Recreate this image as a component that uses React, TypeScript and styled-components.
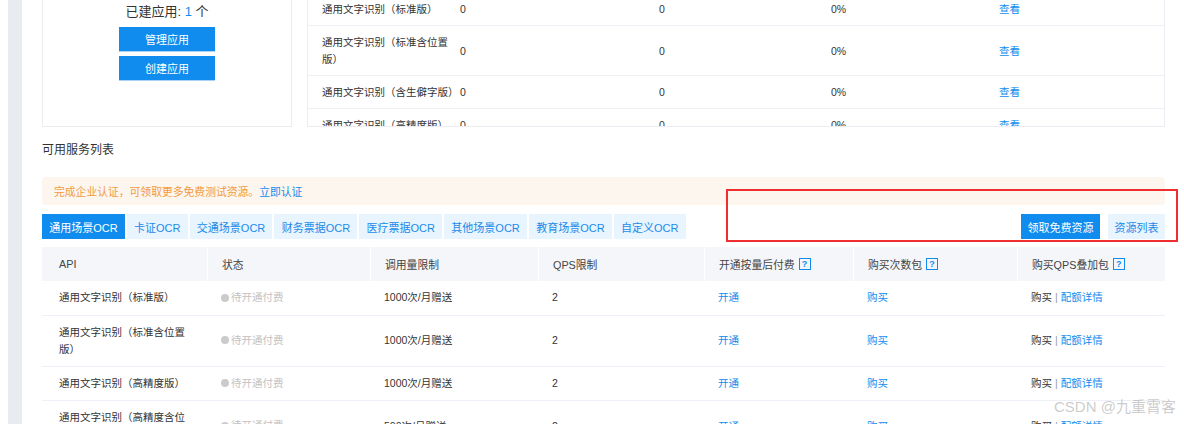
import React from "react";
import styled, { createGlobalStyle } from "styled-components";

const Global = createGlobalStyle`
  html, body {
    margin: 0;
    padding: 0;
    height: 424px;
    overflow: hidden;
    background: #fff;
  }
  body {
    font-family: "Liberation Sans", "Noto Sans CJK SC", sans-serif;
    color: #333;
  }
  * { box-sizing: border-box; }
`;

const BLUE = "#108cee";

const Page = styled.div`
  position: relative;
  display: flex;
  width: 1184px;
  height: 424px;
  overflow: hidden;
`;

const Gutter = styled.div`
  width: 8px;
  flex: none;
`;

const SideStrip = styled.div`
  width: 14px;
  flex: none;
  background: #e8ebf0;
`;

const Main = styled.main`
  position: relative;
  flex: 1;
  padding: 0 19px 0 20px;
`;

const TopSection = styled.section`
  margin-top: -8px;
  height: 135px;
  display: flex;
  gap: 15px;
`;

const AppCard = styled.div`
  width: 250px;
  flex: none;
  border: 1px solid #ececec;
  display: flex;
  flex-direction: column;
  align-items: center;
  padding-top: 10px;
`;

const AppCount = styled.div`
  font-size: 13px;
  line-height: 18px;
  color: #333;
  b {
    font-weight: normal;
    color: ${BLUE};
  }
`;

const AppButton = styled.button<{ $top: number }>`
  width: 96px;
  height: 24px;
  flex: none;
  margin-top: ${(p) => p.$top}px;
  border: none;
  background: ${BLUE};
  color: #fff;
  font-family: inherit;
  font-size: 11px;
  padding: 0;
  box-shadow: 0 1px 0 #a9d3f6;
`;

const UsageTable = styled.div`
  position: relative;
  flex: 1;
  border: 1px solid #ececf2;
  overflow: hidden;
`;

const ScrollThumb = styled.div`
  position: absolute;
  right: 3px;
  top: 0;
  width: 3px;
  height: 6px;
  background: #bdbdbd;
  border-radius: 1px;
`;

const UsageRow = styled.div`
  display: grid;
  grid-template-columns: 152px 199px 172px 168px 1fr;
  align-items: center;
  border-bottom: 1px solid #eef0f6;
  font-size: 10.5px;
  line-height: 17px;
  padding: 8px 0 7px;
`;

const UsageName = styled.div`
  padding-left: 14px;
  color: #333;
`;

const Plain = styled.div`
  color: #333;
`;

const Link = styled.span`
  color: ${BLUE};
  cursor: pointer;
`;

const SectionTitle = styled.h3`
  margin: 16px 0 0;
  font-size: 12px;
  line-height: 14px;
  font-weight: normal;
  color: #333;
`;

const Notice = styled.div`
  margin-top: 20px;
  height: 28px;
  background: #fcf6ef;
  border-radius: 4px;
  padding-left: 12px;
  display: flex;
  align-items: center;
  font-size: 10.8px;
  color: #f39a3f;
`;

const Toolbar = styled.div`
  margin-top: 9px;
  display: flex;
  justify-content: space-between;
  align-items: center;
`;

const Tabs = styled.div`
  display: flex;
  gap: 2px;
`;

const Tab = styled.div<{ $active?: boolean }>`
  height: 25px;
  padding: 0 7.2px;
  display: flex;
  align-items: center;
  font-size: 11px;
  background: ${(p) => (p.$active ? BLUE : "#e8f4fe")};
  color: ${(p) => (p.$active ? "#fff" : "#1a8bea")};
`;

const Actions = styled.div`
  display: flex;
  gap: 8px;
`;

const ActionButton = styled.div<{ $primary?: boolean }>`
  height: 25px;
  padding: 0 6.5px;
  display: flex;
  align-items: center;
  font-size: 11px;
  background: ${(p) => (p.$primary ? BLUE : "#e8f4fe")};
  color: ${(p) => (p.$primary ? "#fff" : "#1a8bea")};
`;

const Annotation = styled.div`
  position: absolute;
  left: 704px;
  top: 189px;
  width: 452px;
  height: 53px;
  border: 2px solid #ef2f2f;
  pointer-events: none;
`;

const COLS = "165px 163px 168px 166px 149px 164px 148px";

const ServiceTable = styled.div`
  margin-top: 8px;
`;

const HeadRow = styled.div`
  display: grid;
  grid-template-columns: ${COLS};
  height: 34px;
  background: #f5f6fa;
  font-size: 10.8px;
  color: #444;
`;

const HeadCell = styled.div<{ $first?: boolean }>`
  display: flex;
  align-items: center;
  padding-left: ${(p) => (p.$first ? 17 : 14)}px;
  border-left: ${(p) => (p.$first ? "none" : "1.5px solid #fff")};
`;

const Help = styled.span`
  margin-left: 4px;
  width: 12px;
  height: 12px;
  border: 1px solid ${BLUE};
  color: ${BLUE};
  font-size: 9px;
  font-weight: bold;
  display: inline-flex;
  align-items: center;
  justify-content: center;
  line-height: 1;
`;

const BodyRow = styled.div`
  display: grid;
  grid-template-columns: ${COLS};
  align-items: center;
  border-bottom: 1px solid #edf0f7;
  font-size: 10.5px;
  line-height: 17px;
  padding: 8px 0;
`;

const BodyCell = styled.div<{ $first?: boolean }>`
  padding-left: ${(p) => (p.$first ? 17 : 14)}px;
  padding-right: ${(p) => (p.$first ? 14 : 0)}px;
  color: #333;
`;

const Status = styled.span`
  display: inline-flex;
  align-items: center;
  gap: 2px;
  color: #c2c2c2;
  &::before {
    content: "";
    width: 8px;
    height: 8px;
    border-radius: 50%;
    background: #cbcbcb;
  }
`;

const Sep = styled.span`
  color: #999;
  margin: 0 3px;
`;

const Watermark = styled.div`
  position: absolute;
  left: 1054px;
  top: 398px;
  font-size: 15px;
  line-height: 18px;
  color: rgba(140, 140, 140, 0.45);
  white-space: nowrap;
  pointer-events: none;
`;

const usage = [
  "通用文字识别（标准版）",
  "通用文字识别（标准含位置版）",
  "通用文字识别（含生僻字版）",
  "通用文字识别（高精度版）",
];

const services = [
  { name: "通用文字识别（标准版）", limit: "1000次/月赠送" },
  { name: "通用文字识别（标准含位置版）", limit: "1000次/月赠送" },
  { name: "通用文字识别（高精度版）", limit: "1000次/月赠送" },
  { name: "通用文字识别（高精度含位置版）", limit: "500次/月赠送" },
];

const tabs = [
  "通用场景OCR",
  "卡证OCR",
  "交通场景OCR",
  "财务票据OCR",
  "医疗票据OCR",
  "其他场景OCR",
  "教育场景OCR",
  "自定义OCR",
];

export default function App() {
  return (
    <>
      <Global />
      <Page>
        <Gutter />
        <SideStrip />
        <Main>
          <TopSection>
            <AppCard>
              <AppCount>
                已建应用: <b>1</b> 个
              </AppCount>
              <AppButton $top={6}>管理应用</AppButton>
              <AppButton $top={5}>创建应用</AppButton>
            </AppCard>
            <UsageTable>
              {usage.map((n) => (
                <UsageRow key={n}>
                  <UsageName>{n}</UsageName>
                  <Plain>0</Plain>
                  <Plain>0</Plain>
                  <Plain>0%</Plain>
                  <div>
                    <Link>查看</Link>
                  </div>
                </UsageRow>
              ))}
              <ScrollThumb />
            </UsageTable>
          </TopSection>

          <SectionTitle>可用服务列表</SectionTitle>
          <Notice>
            完成企业认证，可领取更多免费测试资源。<Link>立即认证</Link>
          </Notice>

          <Toolbar>
            <Tabs>
              {tabs.map((t, i) => (
                <Tab key={t} $active={i === 0}>
                  {t}
                </Tab>
              ))}
            </Tabs>
            <Actions>
              <ActionButton $primary>领取免费资源</ActionButton>
              <ActionButton>资源列表</ActionButton>
            </Actions>
          </Toolbar>

          <ServiceTable>
            <HeadRow>
              <HeadCell $first>API</HeadCell>
              <HeadCell>状态</HeadCell>
              <HeadCell>调用量限制</HeadCell>
              <HeadCell>QPS限制</HeadCell>
              <HeadCell>
                开通按量后付费<Help>?</Help>
              </HeadCell>
              <HeadCell>
                购买次数包<Help>?</Help>
              </HeadCell>
              <HeadCell>
                购买QPS叠加包<Help>?</Help>
              </HeadCell>
            </HeadRow>
            {services.map((s) => (
              <BodyRow key={s.name}>
                <BodyCell $first>{s.name}</BodyCell>
                <BodyCell>
                  <Status>待开通付费</Status>
                </BodyCell>
                <BodyCell>{s.limit}</BodyCell>
                <BodyCell>2</BodyCell>
                <BodyCell>
                  <Link>开通</Link>
                </BodyCell>
                <BodyCell>
                  <Link>购买</Link>
                </BodyCell>
                <BodyCell>
                  购买<Sep>|</Sep>
                  <Link>配额详情</Link>
                </BodyCell>
              </BodyRow>
            ))}
          </ServiceTable>
          <Annotation />
        </Main>
        <Watermark>CSDN @九重霄客</Watermark>
      </Page>
    </>
  );
}
